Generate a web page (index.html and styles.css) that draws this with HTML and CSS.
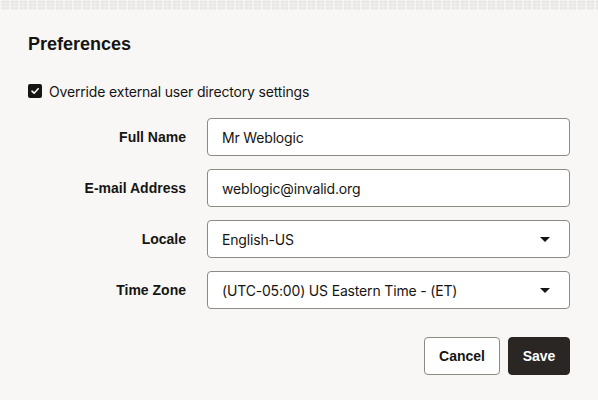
FILE: index.html
```html
<!DOCTYPE html>
<html lang="en">
<head>
<meta charset="utf-8">
<title>Preferences</title>
<link rel="stylesheet" href="styles.css">
</head>
<body>
<div class="strip"></div>
<main class="panel">
  <h1 class="title">Preferences</h1>
  <label class="check-row">
    <span class="checkbox">
      <svg width="10" height="10" viewBox="0 0 10 10"><path d="M2 5.2 L4.1 7.2 L8.2 2.8" fill="none" stroke="#fff" stroke-width="1.6" stroke-linecap="round" stroke-linejoin="round"/></svg>
    </span>
    <span class="check-text">Override external user directory settings</span>
  </label>
  <div class="form">
    <div class="label">Full Name</div>
    <div class="field">Mr Weblogic</div>
    <div class="label">E-mail Address</div>
    <div class="field">weblogic@invalid.org</div>
    <div class="label">Locale</div>
    <div class="field select"><span>English-US</span><span class="caret"></span></div>
    <div class="label">Time Zone</div>
    <div class="field select"><span>(UTC-05:00) US Eastern Time - (ET)</span><span class="caret"></span></div>
  </div>
  <div class="actions">
    <button class="btn cancel">Cancel</button>
    <button class="btn save">Save</button>
  </div>
</main>
</body>
</html>
```
FILE: styles.css
```css
* { box-sizing: border-box; }
html, body { margin: 0; padding: 0; }
body {
  width: 598px;
  height: 400px;
  background: #f8f7f5;
  font-family: Inter, "Noto Sans", sans-serif;
  color: #161513;
  overflow: hidden;
}
.strip {
  height: 10px;
  background-color: #e9e7e4;
  background-image:
    repeating-linear-gradient(90deg, rgba(255,255,255,0.45) 0 2px, transparent 2px 5px, rgba(255,255,255,0.25) 5px 6px, transparent 6px 9px),
    repeating-linear-gradient(0deg, rgba(255,255,255,0.3) 0 1px, transparent 1px 3px);
}
.panel {
  padding: 22px 28px 0 28px;
}
.title {
  margin: 0;
  font-family: "Liberation Sans", Arial, sans-serif;
  font-size: 18px;
  font-weight: 700;
  line-height: 24px;
}
.check-row {
  display: flex;
  align-items: center;
  gap: 7px;
  margin-top: 25px;
  height: 20px;
}
.checkbox {
  width: 14px;
  height: 14px;
  border-radius: 2px;
  background: #161513;
  display: flex;
  align-items: center;
  justify-content: center;
}
.check-text {
  font-size: 14px;
  letter-spacing: -0.17px;
}
.form {
  display: grid;
  grid-template-columns: 158px 363px;
  column-gap: 21px;
  row-gap: 13px;
  margin-top: 17px;
  align-items: center;
}
.label {
  text-align: right;
  font-family: "Liberation Sans", Arial, sans-serif;
  font-size: 14px;
  font-weight: 700;
}
.field {
  height: 38px;
  border: 1px solid #8d8a86;
  border-radius: 4px;
  background: #fff;
  display: flex;
  align-items: center;
  padding: 0 14px;
  font-size: 14px;
  letter-spacing: -0.17px;
}
.select {
  justify-content: space-between;
  padding-right: 19px;
}
.caret {
  width: 0;
  height: 0;
  border-left: 5px solid transparent;
  border-right: 5px solid transparent;
  border-top: 5px solid #161513;
}
.actions {
  display: flex;
  justify-content: flex-end;
  gap: 8px;
  margin-top: 28px;
}
.btn {
  height: 38px;
  border-radius: 4px;
  font-family: "Liberation Sans", Arial, sans-serif;
  font-size: 14px;
  font-weight: 700;
  padding: 0;
}
.cancel {
  width: 76px;
  background: #fff;
  border: 1px solid #8d8a86;
  color: #161513;
}
.save {
  width: 62px;
  background: #2a2624;
  border: 1px solid #2a2624;
  color: #fff;
}
```
